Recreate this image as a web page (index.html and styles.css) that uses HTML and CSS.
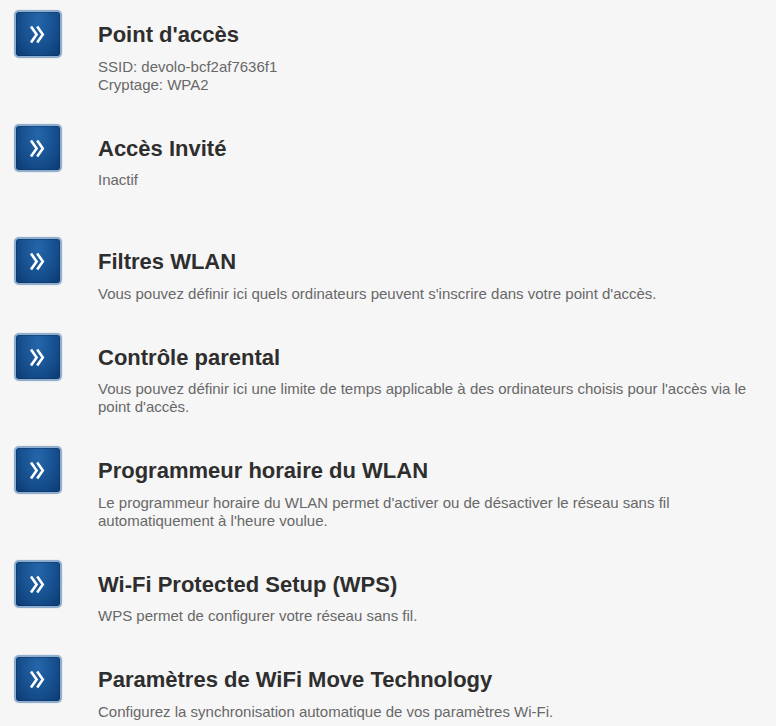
FILE: index.html
```html
<!DOCTYPE html>
<html lang="fr">
<head>
<meta charset="utf-8">
<title>WLAN</title>
<link rel="stylesheet" href="styles.css">
</head>
<body>
<div class="list">
  <div class="row">
    <a class="btn" href="#"><svg viewBox="0 0 48 48" width="48" height="48"><path d="M17 16.5 L22.6 24.5 L17 32.5 M23.2 16.5 L28.8 24.5 L23.2 32.5" /></svg></a>
    <div class="text">
      <h2 class="title">Point d'accès</h2>
      <p class="desc">SSID: devolo-bcf2af7636f1<br>Cryptage: WPA2</p>
    </div>
  </div>
  <div class="row">
    <a class="btn" href="#"><svg viewBox="0 0 48 48" width="48" height="48"><path d="M17 16.5 L22.6 24.5 L17 32.5 M23.2 16.5 L28.8 24.5 L23.2 32.5" /></svg></a>
    <div class="text">
      <h2 class="title">Accès Invité</h2>
      <p class="desc">Inactif<br>&nbsp;</p>
    </div>
  </div>
  <div class="row">
    <a class="btn" href="#"><svg viewBox="0 0 48 48" width="48" height="48"><path d="M17 16.5 L22.6 24.5 L17 32.5 M23.2 16.5 L28.8 24.5 L23.2 32.5" /></svg></a>
    <div class="text">
      <h2 class="title">Filtres WLAN</h2>
      <p class="desc">Vous pouvez définir ici quels ordinateurs peuvent s'inscrire dans votre point d'accès.</p>
    </div>
  </div>
  <div class="row">
    <a class="btn" href="#"><svg viewBox="0 0 48 48" width="48" height="48"><path d="M17 16.5 L22.6 24.5 L17 32.5 M23.2 16.5 L28.8 24.5 L23.2 32.5" /></svg></a>
    <div class="text">
      <h2 class="title">Contrôle parental</h2>
      <p class="desc">Vous pouvez définir ici une limite de temps applicable à des ordinateurs choisis pour l'accès via le point d'accès.</p>
    </div>
  </div>
  <div class="row">
    <a class="btn" href="#"><svg viewBox="0 0 48 48" width="48" height="48"><path d="M17 16.5 L22.6 24.5 L17 32.5 M23.2 16.5 L28.8 24.5 L23.2 32.5" /></svg></a>
    <div class="text">
      <h2 class="title">Programmeur horaire du WLAN</h2>
      <p class="desc">Le programmeur horaire du WLAN permet d'activer ou de désactiver le réseau sans fil<br>automatiquement à l'heure voulue.</p>
    </div>
  </div>
  <div class="row">
    <a class="btn" href="#"><svg viewBox="0 0 48 48" width="48" height="48"><path d="M17 16.5 L22.6 24.5 L17 32.5 M23.2 16.5 L28.8 24.5 L23.2 32.5" /></svg></a>
    <div class="text">
      <h2 class="title">Wi-Fi Protected Setup (WPS)</h2>
      <p class="desc">WPS permet de configurer votre réseau sans fil.</p>
    </div>
  </div>
  <div class="row">
    <a class="btn" href="#"><svg viewBox="0 0 48 48" width="48" height="48"><path d="M17 16.5 L22.6 24.5 L17 32.5 M23.2 16.5 L28.8 24.5 L23.2 32.5" /></svg></a>
    <div class="text">
      <h2 class="title">Paramètres de WiFi Move Technology</h2>
      <p class="desc">Configurez la synchronisation automatique de vos paramètres Wi-Fi.</p>
    </div>
  </div>
</div>
</body>
</html>
```

FILE: styles.css
```css
html, body {
  margin: 0;
  padding: 0;
  background: #f6f6f6;
}
body {
  font-family: "Liberation Sans", Arial, sans-serif;
  color: #333;
}
.list {
  padding: 10px 10px 0 14px;
}
.row {
  display: flex;
  align-items: flex-start;
  margin-bottom: 30px;
}
.btn {
  flex: 0 0 auto;
  display: block;
  width: 48px;
  height: 48px;
  box-sizing: border-box;
  border-radius: 5px;
  border: 2px solid #8eaed0;
  background: radial-gradient(ellipse at 50% 20%, #2467ab 0%, #17508f 55%, #0b3a72 100%);
  box-shadow: inset 0 0 0 1px rgba(10,40,80,0.35), 0 0 1px rgba(0,0,0,0.35);
  position: relative;
  overflow: hidden;
}
.btn svg {
  position: absolute;
  left: -2px;
  top: -2px;
  fill: none;
  stroke: #ffffff;
  stroke-width: 2.6;
  stroke-linecap: butt;
  stroke-linejoin: miter;
}
.text {
  margin-left: 36px;
  padding-top: 12px;
  flex: 1 1 auto;
}
.title {
  margin: 0 0 9.5px 0;
  font-size: 22px;
  line-height: 26px;
  font-weight: bold;
  color: #2e2e2e;
}
.desc {
  margin: 0;
  font-size: 15px;
  line-height: 18px;
  color: #686868;
}
```
